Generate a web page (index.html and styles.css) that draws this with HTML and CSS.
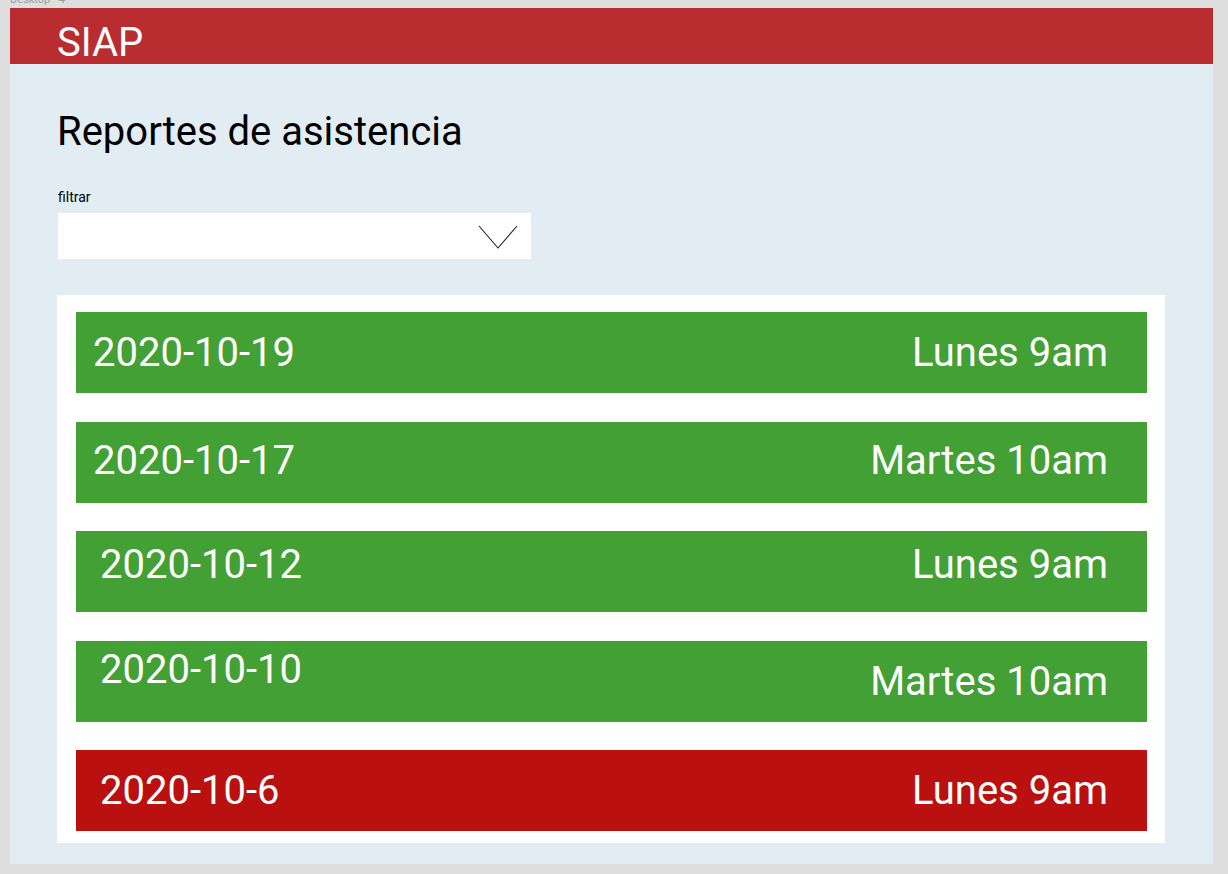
FILE: index.html
```html
<!DOCTYPE html>
<html lang="es">
<head>
<meta charset="utf-8">
<title>SIAP - Reportes de asistencia</title>
<link rel="stylesheet" href="styles.css">
</head>
<body>
  <div class="frame-label"><span>Desktop - 4</span></div>
  <div class="frame">
    <header class="topbar">SIAP</header>
    <main class="content">
      <h1 class="title">Reportes de asistencia</h1>
      <label class="filter-label">filtrar</label>
      <div class="select">
        <svg class="chevron" width="40" height="24" viewBox="0 0 40 24" aria-hidden="true">
          <polyline points="1,1 20,23 39,1" fill="none" stroke="#222" stroke-width="1.1"/>
        </svg>
      </div>
      <section class="card">
        <div class="row row--ok">
          <span class="date">2020-10-19</span>
          <span class="slot">Lunes 9am</span>
        </div>
        <div class="row row--ok row--lift">
          <span class="date">2020-10-17</span>
          <span class="slot">Martes 10am</span>
        </div>
        <div class="row row--ok row--inset row--high">
          <span class="date">2020-10-12</span>
          <span class="slot">Lunes 9am</span>
        </div>
        <div class="row row--ok row--inset">
          <span class="date date--raised">2020-10-10</span>
          <span class="slot">Martes 10am</span>
        </div>
        <div class="row row--bad row--inset">
          <span class="date">2020-10-6</span>
          <span class="slot">Lunes 9am</span>
        </div>
      </section>
    </main>
  </div>
</body>
</html>
```

FILE: styles.css
```css
* { box-sizing: border-box; }

html, body { margin: 0; padding: 0; }

body {
  background: #dedede;
  font-family: Roboto, "Liberation Sans", sans-serif;
  padding: 0 15px 10px 10px;
  width: 1228px;
  height: 874px;
  overflow: hidden;
}

.frame-label {
  height: 8px;
  overflow: hidden;
  font-size: 11px;
  line-height: 13px;
  color: #9c9c9c;
}
.frame-label span { display: block; margin-top: -7px; }

.frame {
  width: 1203px;
  background: #e1ecf3;
  padding-bottom: 21px;
}

.topbar {
  height: 56px;
  background: #b92c30;
  color: #ffffff;
  font-size: 40px;
  line-height: 40px;
  padding: 15px 0 0 47px;
}

.content {
  padding: 0 0 0 47px;
}

.title {
  margin: 44px 0 0;
  font-size: 40px;
  line-height: 47px;
  font-weight: 400;
  color: #000;
}

.filter-label {
  display: block;
  margin-top: 34px;
  margin-left: 1px;
  font-size: 14px;
  line-height: 16px;
  color: #000;
}

.select {
  margin-top: 8px;
  margin-left: 1px;
  width: 473px;
  height: 46px;
  background: #fff;
  display: flex;
  justify-content: flex-end;
  align-items: flex-start;
  padding: 12px 13px 0 0;
}
.chevron { display: block; }

.card {
  margin-top: 36px;
  width: 1108px;
  background: #fff;
  padding: 17px 18px 12px 19px;
  display: flex;
  flex-direction: column;
  gap: 28.5px;
}

.row {
  height: 81px;
  display: flex;
  align-items: center;
  justify-content: space-between;
  padding: 0 39px 0 17px;
  color: #fff;
  font-size: 40px;
  line-height: 47px;
}
.row--ok { background: #43a035; }
.row--bad { background: #ba1010; }
.row--inset { padding-left: 24px; }
.row--lift { padding-bottom: 4px; }
.row--high { padding-bottom: 14px; }
.date--raised { margin-bottom: 24px; }
```
